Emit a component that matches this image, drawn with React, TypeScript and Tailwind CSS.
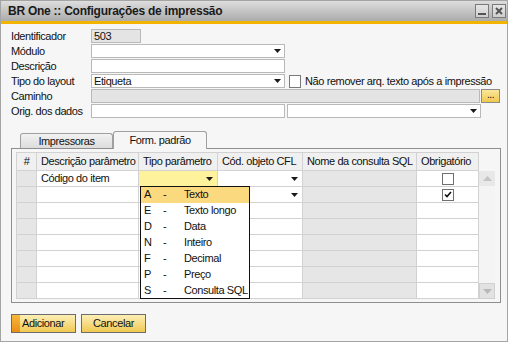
import React from "react";

const Arrow = () => (
  <svg width="7" height="4" viewBox="0 0 7 4" className="shrink-0">
    <path d="M0 0H7L3.5 4Z" fill="#1a1a1a" />
  </svg>
);

const Field = ({
  w,
  gray,
  text,
  arrow,
}: {
  w: string;
  gray?: boolean;
  text?: string;
  arrow?: boolean;
}) => (
  <div
    className={`${w} h-[14px] border border-[#b9b9b9] flex items-center justify-between pl-[2px] pr-[3px] ${
      gray ? "bg-[#e4e4e4]" : "bg-white"
    }`}
  >
    <span className="leading-none">{text}</span>
    {arrow && <Arrow />}
  </div>
);

const Row = ({ label, children }: { label: string; children: React.ReactNode }) => (
  <div className="flex items-center h-[14px]">
    <div className="w-[80px] leading-none">{label}</div>
    {children}
  </div>
);

const Check = ({ checked }: { checked?: boolean }) => (
  <div className="w-[12px] h-[12px] border border-[#6f6f6f] bg-white flex items-center justify-center">
    {checked && (
      <svg width="8" height="7" viewBox="0 0 8 7">
        <path d="M1 3.5L3 5.5L7 1" stroke="#111" strokeWidth="1.6" fill="none" />
      </svg>
    )}
  </div>
);

const cols = ["w-[20px]", "w-[102px]", "w-[79px]", "w-[85px]", "w-[114px]", "w-[62px]"];

export default function App() {
  const rows = Array.from({ length: 8 }, (_, i) => i);
  const items: [string, string][] = [
    ["A", "Texto"],
    ["E", "Texto longo"],
    ["D", "Data"],
    ["N", "Inteiro"],
    ["F", "Decimal"],
    ["P", "Preço"],
    ["S", "Consulta SQL"],
  ];
  return (
    <div
      className="w-[511px] h-[344px] bg-white text-[11px] tracking-[-0.4px] text-[#111] whitespace-nowrap"
      style={{ fontFamily: '"Liberation Sans", Arial, sans-serif' }}
    >
      <div className="w-[508px] h-[342px] border border-[#a4a4a4] bg-[#f6f6f6] flex flex-col">
        {/* title bar */}
        <div className="h-[20px] bg-gradient-to-b from-[#dedede] to-[#ababab] flex items-center justify-between pl-[7px] pr-[1px]">
          <span className="font-bold text-[12px] tracking-[-0.25px] text-[#1a1a1a] leading-none">
            BR One :: Configurações de impressão
          </span>
          <div className="flex gap-[3px] items-center">
            <div className="w-[14px] h-[14px] border border-[#7a7a7a] bg-gradient-to-b from-[#e6e6e6] to-[#cfcfcf] flex items-end justify-center pb-[2px]">
              <div className="w-[8px] h-[2px] bg-[#555]" />
            </div>
            <div className="w-[14px] h-[14px] border border-[#7a7a7a] bg-gradient-to-b from-[#e6e6e6] to-[#cfcfcf] flex items-center justify-center">
              <svg width="8" height="8" viewBox="0 0 8 8">
                <path d="M1 1L7 7M7 1L1 7" stroke="#555" strokeWidth="2" />
              </svg>
            </div>
          </div>
        </div>
        <div className="h-[3px] bg-[#f2b400]" />

        {/* form */}
        <div className="pl-[10px] pt-[5px] flex flex-col gap-[1px]">
          <Row label="Identificador">
            <Field w="w-[50px]" gray text="503" />
          </Row>
          <Row label="Módulo">
            <Field w="w-[194px]" arrow />
          </Row>
          <Row label="Descrição">
            <Field w="w-[194px]" />
          </Row>
          <Row label="Tipo do layout">
            <Field w="w-[194px]" text="Etiqueta" arrow />
            <div className="ml-[4px] w-[12px] h-[13px] border border-[#7a7a7a] bg-white" />
            <span className="ml-[4px] leading-none">Não remover arq. texto após a impressão</span>
          </Row>
          <Row label="Caminho">
            <Field w="w-[389px]" gray />
            <div className="ml-[1px] w-[19px] h-[14px] border border-[#8a8a8a] bg-gradient-to-b from-[#fbe79a] to-[#f0c84c] flex items-center justify-center text-[10px] leading-none pb-[3px]">
              ...
            </div>
          </Row>
          <Row label="Orig. dos dados">
            <Field w="w-[194px]" />
            <div className="ml-[2px]">
              <Field w="w-[194px]" arrow />
            </div>
          </Row>
        </div>

        {/* tabs */}
        <div className="pl-[10px] mt-[12px]">
          <div className="flex items-end pl-[9px] h-[18px]">
            <div className="w-[93px] h-[15px] border border-b-0 border-[#a0a0a0] rounded-t-[3px] bg-gradient-to-b from-[#f2f2f2] to-[#dcdcdc] flex items-center justify-center leading-none">
              Impressoras
            </div>
            <div className="w-[94px] h-[18px] border border-b-0 border-[#a0a0a0] rounded-t-[3px] bg-[#f6f6f6] flex items-center justify-center leading-none relative top-[1px] z-10">
              Form. padrão
            </div>
          </div>
          <div className="w-[490px] h-[155px] border border-[#8e8e8e] pl-[4px] pt-[3px]">
            <div className="relative flex">
              {/* grid */}
              <div className="border-t border-l border-[#d2d2d2]">
                <div className="flex h-[18px]">
                  {["#", "Descrição parâmetro", "Tipo parâmetro", "Cód. objeto CFL", "Nome da consulta SQL", "Obrigatório"].map(
                    (h, i) => (
                      <div
                        key={h}
                        className={`${cols[i]} border-r border-b border-[#d2d2d2] bg-[#f0f0f0] flex items-center ${
                          i === 0 ? "justify-center" : "pl-[4px]"
                        } leading-none overflow-hidden`}
                      >
                        {h}
                      </div>
                    )
                  )}
                </div>
                {rows.map((r) => (
                  <div key={r} className="flex h-[16px]">
                    <div className={`${cols[0]} border-r border-b border-[#d2d2d2] bg-[#e6e6e6]`} />
                    <div className={`${cols[1]} border-r border-b border-[#d2d2d2] bg-white flex items-center pl-[4px] leading-none`}>
                      {r === 0 ? "Código do item" : ""}
                    </div>
                    <div
                      className={`${cols[2]} border-r border-b border-[#d2d2d2] ${
                        r === 0 ? "bg-[#fff29c]" : "bg-white"
                      } flex items-center justify-end pr-[4px]`}
                    >
                      {r === 0 && <Arrow />}
                    </div>
                    <div className={`${cols[3]} border-r border-b border-[#d2d2d2] bg-white flex items-center justify-end pr-[4px]`}>
                      {r < 2 && <Arrow />}
                    </div>
                    <div className={`${cols[4]} border-r border-b border-[#d2d2d2] bg-[#e6e6e6]`} />
                    <div className={`${cols[5]} border-r border-b border-[#d2d2d2] bg-white flex items-center justify-center`}>
                      {r < 2 && <Check checked={r === 1} />}
                    </div>
                  </div>
                ))}
              </div>
              {/* scrollbar */}
              <div className="w-[16px] mt-[19px] h-[128px] bg-[#f4f4f4] flex flex-col justify-between">
                <div className="h-[15px] bg-[#e8e8e8] flex items-center justify-center">
                  <svg width="9" height="5" viewBox="0 0 9 5">
                    <path d="M0 5H9L4.5 0Z" fill="#c4c4c4" />
                  </svg>
                </div>
                <div className="h-[16px] bg-[#e2e2e2] border border-[#d0d0d0] flex items-center justify-center">
                  <svg width="9" height="5" viewBox="0 0 9 5">
                    <path d="M0 0H9L4.5 5Z" fill="#b8b8b8" />
                  </svg>
                </div>
              </div>

              {/* dropdown list */}
              <div className="absolute left-[124px] top-[34px] w-[110px] h-[113px] border border-[#111] bg-white z-20 flex flex-col">
                {items.map(([k, v], i) => (
                  <div
                    key={k}
                    className={`h-[16px] flex items-center leading-none ${i === 0 ? "bg-[#fbd97e]" : ""}`}
                  >
                    <span className="w-[22px] pl-[3px]">{k}</span>
                    <span className="w-[21px]">-</span>
                    <span>{v}</span>
                  </div>
                ))}
              </div>
            </div>
          </div>
        </div>

        {/* buttons */}
        <div className="pl-[10px] mt-[11px] flex gap-[5px]">
          <div className="w-[65px] h-[19px] border border-[#6c6c6c] bg-gradient-to-b from-[#fcefb4] to-[#f1c94e] flex items-center relative overflow-hidden">
            <div className="absolute left-0 top-0 bottom-0 w-[8px] bg-gradient-to-b from-[#f7b83a] to-[#ea8e12]" />
            <span className="relative pl-[10px] leading-none">Adicionar</span>
          </div>
          <div className="w-[65px] h-[19px] border border-[#6c6c6c] bg-gradient-to-b from-[#fcefb4] to-[#f1c94e] flex items-center justify-center leading-none">
            Cancelar
          </div>
        </div>
      </div>
    </div>
  );
}
